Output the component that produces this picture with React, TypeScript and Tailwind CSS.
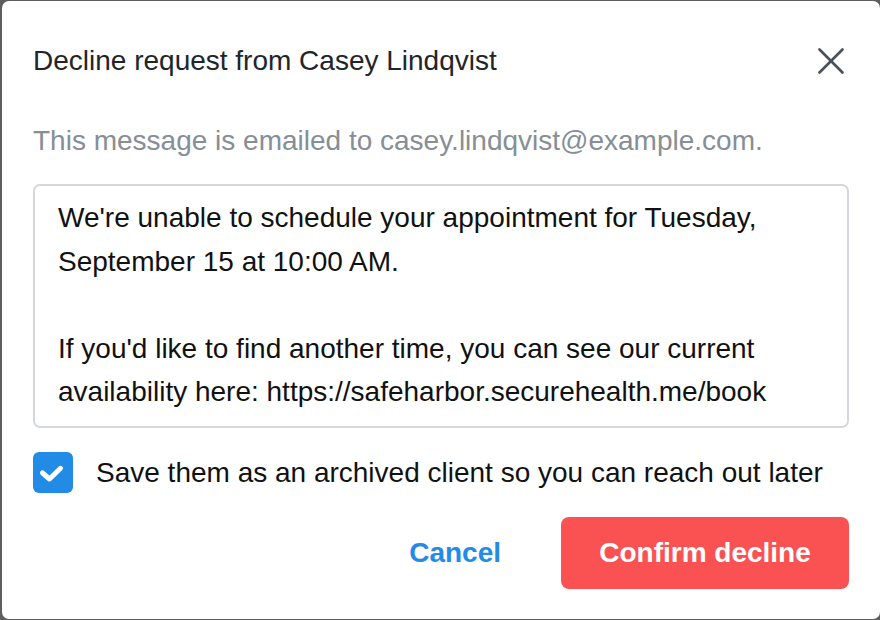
import React from "react";

export default function App() {
  return (
    <div
      className="w-[880px] h-[620px] bg-[#5e5e5e] flex overflow-hidden"
      style={{ fontFamily: '"Liberation Sans", Arial, sans-serif' }}
    >
      <div className="ml-[2px] mt-[1px] w-[878px] h-[618px] bg-white rounded-[7px] px-[31px] pt-[44px] flex flex-col">
        {/* Header */}
        <div className="flex items-center justify-between h-[32px]">
          <h2 className="text-[28px] leading-[32px] text-[#212529]">Decline request from Casey Lindqvist</h2>
          <button className="w-[32px] h-[32px] mr-[2px] flex items-center justify-center text-[#495057]">
            <svg width="26" height="26" viewBox="0 0 26 26" fill="none" stroke="currentColor" strokeWidth="2.6" strokeLinecap="round">
              <path d="M1.5 1.5 L24.5 24.5" />
              <path d="M24.5 1.5 L1.5 24.5" />
            </svg>
          </button>
        </div>

        <p className="mt-[48px] text-[28px] leading-[32px] text-[#868e96]">
          This message is emailed to casey.lindqvist@example.com.
        </p>

        {/* Message */}
        <div className="mt-[27px] h-[244px] border-2 border-[#d4d8dd] rounded-[7px] pl-[23px] pr-[16px] pt-[10px] overflow-hidden text-[28px] leading-[43.5px] text-[#111]">
          <div>We're unable to schedule your appointment for Tuesday,</div>
          <div>September 15 at 10:00 AM.</div>
          <div className="h-[43.5px]" />
          <div>If you'd like to find another time, you can see our current</div>
          <div>availability here: https://safeharbor.securehealth.me/book</div>
        </div>

        {/* Checkbox */}
        <label className="mt-[24px] flex items-center gap-[23px]">
          <span className="w-[40px] h-[41px] rounded-[6px] bg-[#228be6] flex items-center justify-center shrink-0">
            <svg width="40" height="40" viewBox="0 0 40 40" fill="none" stroke="white" strokeWidth="5" strokeLinecap="round" strokeLinejoin="round">
              <path d="M9.5 20 L16.5 26 L27.5 15.3" />
            </svg>
          </span>
          <span className="text-[28px] leading-[32px] text-[#111]">
            Save them as an archived client so you can reach out later
          </span>
        </label>

        {/* Actions */}
        <div className="mt-[24px] flex justify-end items-center gap-8">
          <button className="h-[72px] px-7 text-[28px] font-bold text-[#228be6]">Cancel</button>
          <button className="h-[72px] w-[288px] rounded-[8px] bg-[#fa5252] text-[28px] font-bold text-white">
            Confirm decline
          </button>
        </div>
      </div>
    </div>
  );
}
